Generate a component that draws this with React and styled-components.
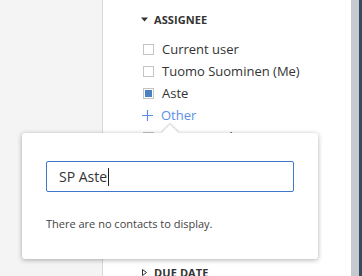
import React from "react";
import styled, { createGlobalStyle } from "styled-components";

const Global = createGlobalStyle`
  html, body { margin: 0; padding: 0; }
  body { font-family: "Open Sans", "Noto Sans", sans-serif; color: #333; }
`;

const Page = styled.div`
  position: relative;
  display: flex;
  width: 362px;
  height: 276px;
  overflow: hidden;
  background: #fff;
`;

const LeftPane = styled.div`
  width: 102px;
  flex: none;
  background: #f4f4f4;
  border-right: 1px solid #d9d9d9;
`;

const Panel = styled.div`
  width: 248px;
  flex: none;
  background: #fff;
  padding: 12px 0 0 38px;
  box-sizing: border-box;
`;

const Scrollbar = styled.div`
  width: 8px;
  flex: none;
  background: #c5c9d0;
`;

const DarkEdge = styled.div`
  flex: 1;
  background: #3c4a5e;
`;

const SectionHeader = styled.div`
  display: flex;
  align-items: center;
  gap: 6px;
  height: 14px;
  font-size: 11px;
  font-weight: 700;
  letter-spacing: 0.1px;
  color: #333;
  margin-top: ${(p) => p.$mt || 0}px;
`;

const Caret = styled.svg`
  width: 7px;
  height: 7px;
  flex: none;
`;

const List = styled.div`
  display: flex;
  flex-direction: column;
  margin-top: 12px;
`;

const Row = styled.label`
  display: flex;
  align-items: center;
  height: 22px;
  gap: 8px;
  font-size: 13px;
  color: ${(p) => (p.$link ? "#5b8ee6" : "#333")};
`;

const Box = styled.span`
  width: 9px;
  height: 9px;
  margin-left: 2px;
  border: 1px solid #c4c4c4;
  background: #fff;
  display: flex;
  align-items: center;
  justify-content: center;
  flex: none;
  &::after {
    content: "";
    width: 7px;
    height: 7px;
    background: ${(p) => (p.$checked ? "#4a80c4" : "transparent")};
  }
`;

const Plus = styled.svg`
  width: 11px;
  height: 11px;
  margin-left: 1px;
  flex: none;
`;

const Popover = styled.div`
  position: absolute;
  left: 22px;
  top: 133px;
  width: 296px;
  height: 126px;
  box-sizing: border-box;
  background: #fff;
  border-radius: 3px;
  box-shadow: 0 1px 5px rgba(0, 0, 0, 0.32);
  padding: 28px 24px 0 24px;
  &::before {
    content: "";
    position: absolute;
    left: 142px;
    top: -6px;
    width: 12px;
    height: 12px;
    background: #fff;
    transform: rotate(45deg);
    box-shadow: -1px -1px 2px rgba(0, 0, 0, 0.18);
  }
`;

const Input = styled.div`
  position: relative;
  height: 31px;
  box-sizing: border-box;
  border: 1px solid #3d78c9;
  border-radius: 2px;
  padding-left: 12px;
  display: flex;
  align-items: center;
  font-size: 14px;
  color: #333;
  background: #fff;
`;

const Cursor = styled.span`
  display: inline-block;
  width: 1px;
  height: 18px;
  background: #222;
  margin-left: 1px;
`;

const Empty = styled.div`
  margin-top: 24px;
  font-size: 11px;
  color: #444;
`;

export default function App() {
  return (
    <>
      <Global />
      <Page>
        <LeftPane />
        <Panel>
          <SectionHeader>
            <Caret viewBox="0 0 7 7">
              <path d="M0 1.5 L7 1.5 L3.5 5.5 Z" fill="#333" />
            </Caret>
            ASSIGNEE
          </SectionHeader>
          <List>
            <Row><Box />Current user</Row>
            <Row><Box />Tuomo Suominen (Me)</Row>
            <Row><Box $checked />Aste</Row>
            <Row $link>
              <Plus viewBox="0 0 11 11">
                <path d="M5.5 0 V11 M0 5.5 H11" stroke="#5b8ee6" strokeWidth="1.2" />
              </Plus>
              Other
            </Row>
            <Row><Box />Unassigned</Row>
          </List>
          <SectionHeader $mt={117}>
            <Caret viewBox="0 0 7 7">
              <path d="M1.5 0.5 L5.5 3.5 L1.5 6.5 Z" fill="none" stroke="#333" strokeWidth="1" />
            </Caret>
            DUE DATE
          </SectionHeader>
        </Panel>
        <Scrollbar />
        <DarkEdge />
        <Popover>
          <Input>
            SP Aste<Cursor />
          </Input>
          <Empty>There are no contacts to display.</Empty>
        </Popover>
      </Page>
    </>
  );
}
